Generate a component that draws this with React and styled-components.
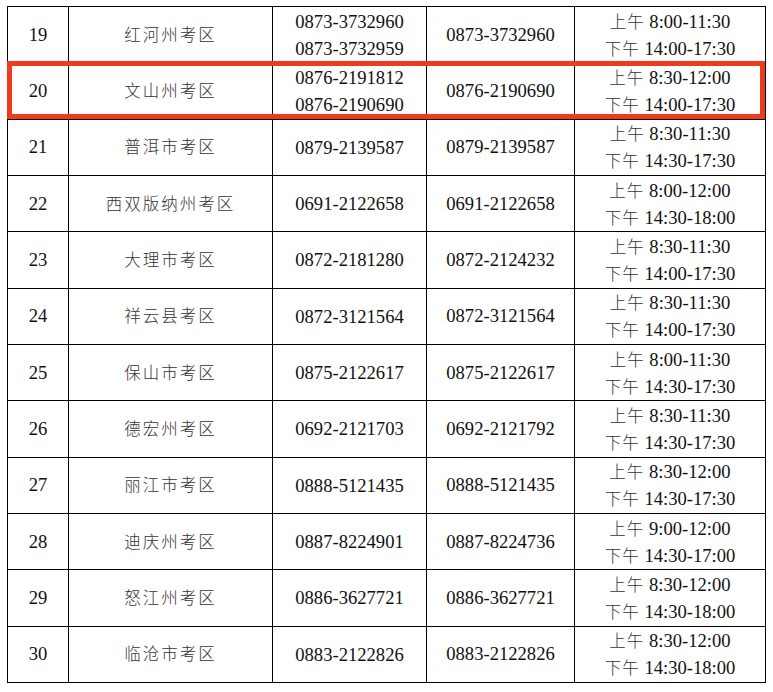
import styled, { createGlobalStyle } from "styled-components";

const GlobalStyle = createGlobalStyle`
  html, body {
    margin: 0;
    padding: 0;
    background: #ffffff;
  }
`;

const rows = [
  { no: 19, name: "红河州考区", tel: ["0873-3732960", "0873-3732959"], fax: "0873-3732960", am: "8:00-11:30", pm: "14:00-17:30" },
  { no: 20, name: "文山州考区", tel: ["0876-2191812", "0876-2190690"], fax: "0876-2190690", am: "8:30-12:00", pm: "14:00-17:30" },
  { no: 21, name: "普洱市考区", tel: ["0879-2139587"], fax: "0879-2139587", am: "8:30-11:30", pm: "14:30-17:30" },
  { no: 22, name: "西双版纳州考区", tel: ["0691-2122658"], fax: "0691-2122658", am: "8:00-12:00", pm: "14:30-18:00" },
  { no: 23, name: "大理市考区", tel: ["0872-2181280"], fax: "0872-2124232", am: "8:30-11:30", pm: "14:00-17:30" },
  { no: 24, name: "祥云县考区", tel: ["0872-3121564"], fax: "0872-3121564", am: "8:30-11:30", pm: "14:00-17:30" },
  { no: 25, name: "保山市考区", tel: ["0875-2122617"], fax: "0875-2122617", am: "8:00-11:30", pm: "14:30-17:30" },
  { no: 26, name: "德宏州考区", tel: ["0692-2121703"], fax: "0692-2121792", am: "8:30-11:30", pm: "14:30-17:30" },
  { no: 27, name: "丽江市考区", tel: ["0888-5121435"], fax: "0888-5121435", am: "8:30-12:00", pm: "14:30-17:30" },
  { no: 28, name: "迪庆州考区", tel: ["0887-8224901"], fax: "0887-8224736", am: "9:00-12:00", pm: "14:30-17:00" },
  { no: 29, name: "怒江州考区", tel: ["0886-3627721"], fax: "0886-3627721", am: "8:30-12:00", pm: "14:30-18:00" },
  { no: 30, name: "临沧市考区", tel: ["0883-2122826"], fax: "0883-2122826", am: "8:30-12:00", pm: "14:30-18:00" },
];

export default function App() {
  return (
    <Page>
      <GlobalStyle />
      <TableWrap>
        <Table>
          <colgroup>
            <col style={{ width: 61 }} />
            <col style={{ width: 204 }} />
            <col style={{ width: 154 }} />
            <col style={{ width: 148 }} />
            <col style={{ width: 191 }} />
          </colgroup>
          <tbody>
            {rows.map((r) => (
              <Row key={r.no}>
                <Cell>{r.no}</Cell>
                <Cell>
                  <Name>{r.name}</Name>
                </Cell>
                <Cell>
                  {r.tel.map((t) => (
                    <Line key={t}>{t}</Line>
                  ))}
                </Cell>
                <Cell>{r.fax}</Cell>
                <Cell>
                  <Line>
                    <Cjk>上午</Cjk> {r.am}
                  </Line>
                  <Line>
                    <Cjk>下午</Cjk> {r.pm}
                  </Line>
                </Cell>
              </Row>
            ))}
          </tbody>
        </Table>
        <Highlight />
      </TableWrap>
    </Page>
  );
}

const Page = styled.div`
  padding: 6px 0 0 7px;
  font-family: "Liberation Serif", "Noto Sans CJK SC", serif;
  color: #111;
`;

const TableWrap = styled.div`
  position: relative;
  width: 758px;
`;

const Table = styled.table`
  width: 758px;
  table-layout: fixed;
  border-collapse: collapse;
`;

const Row = styled.tr`
  height: 56.33px;
`;

const Cell = styled.td`
  border: 1.3px solid #000;
  padding: 0;
  height: 55px;
  text-align: center;
  vertical-align: middle;
  font-size: 18.6px;
  line-height: 24px;
  overflow: hidden;
`;

const Line = styled.div`
  height: 27px;
  line-height: 27px;
  white-space: nowrap;
  overflow: visible;
`;

const Name = styled.span`
  font-family: "Noto Sans CJK SC", sans-serif;
  font-size: 16.5px;
  line-height: 1;
  font-weight: 300;
  letter-spacing: 2px;
  color: #333;
`;

const Cjk = styled.span`
  font-family: "Noto Sans CJK SC", sans-serif;
  font-size: 16.5px;
  line-height: 1;
  font-weight: 300;
  letter-spacing: 1px;
  color: #333;
`;

const Highlight = styled.div`
  position: absolute;
  top: 55px;
  left: 0;
  width: 758px;
  height: 58px;
  box-sizing: border-box;
  border: 5px solid #f03a1e;
  pointer-events: none;
`;
